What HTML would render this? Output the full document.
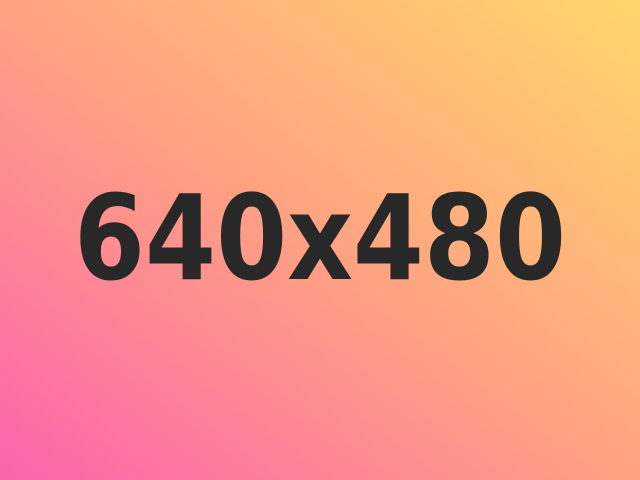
<!DOCTYPE html>
<html><head><style>
html,body{margin:0;padding:0;width:640px;height:480px;overflow:hidden}
body{background:linear-gradient(to top right,#fa64ac 0%,#ffa282 50%,#ffd66a 100%)}
svg{position:absolute;left:0;top:0}
</style></head><body>
<svg width="640" height="480"><text x="0" y="279" transform="translate(320,0) scale(0.865,1)" text-anchor="middle" font-family="DejaVu Sans, sans-serif" font-weight="bold" font-size="118" fill="#282828">640x480</text></svg>
</body></html>
